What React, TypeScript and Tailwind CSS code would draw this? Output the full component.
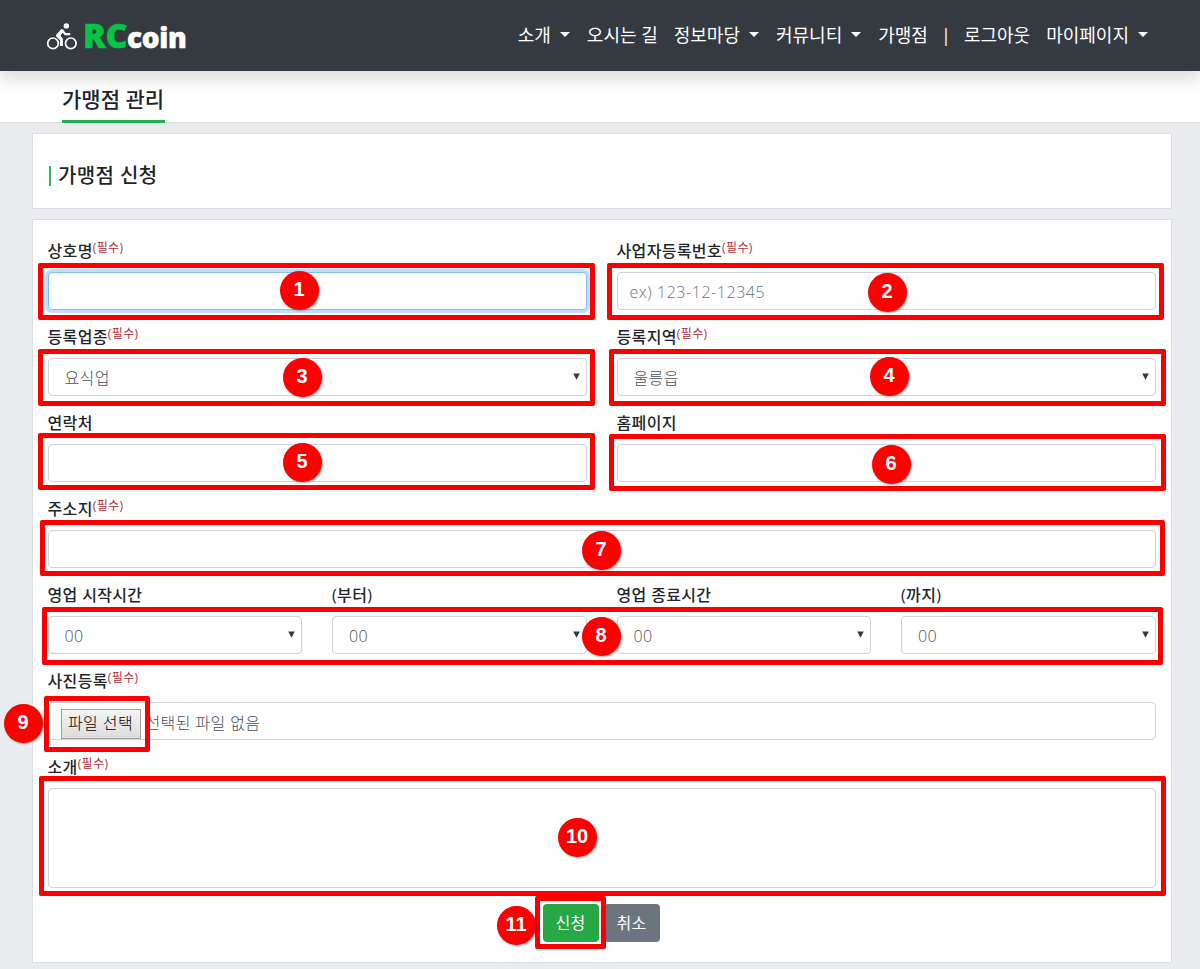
import React from "react";

type BoxSpec = { x: number; y: number; w: number; h: number };
type Badge = { n: number; x: number; y: number };

const boxes: BoxSpec[] = [
  { x: 38, y: 263, w: 557, h: 57 },
  { x: 607, y: 263, w: 557, h: 57 },
  { x: 38, y: 349, w: 557, h: 57 },
  { x: 609, y: 349, w: 557, h: 57 },
  { x: 38, y: 433, w: 557, h: 57 },
  { x: 609, y: 434, w: 557, h: 57 },
  { x: 40, y: 520, w: 1125, h: 56 },
  { x: 42, y: 607, w: 1121, h: 58 },
  { x: 44, y: 696, w: 106, h: 56 },
  { x: 39, y: 776, w: 1127, h: 120 },
  { x: 535, y: 896, w: 71, h: 53 },
];

const badges: Badge[] = [
  { n: 1, x: 299, y: 290 },
  { n: 2, x: 887, y: 292 },
  { n: 3, x: 302, y: 377 },
  { n: 4, x: 889, y: 376 },
  { n: 5, x: 302, y: 462 },
  { n: 6, x: 891, y: 464 },
  { n: 7, x: 601, y: 550 },
  { n: 8, x: 601, y: 636 },
  { n: 9, x: 23, y: 723 },
  { n: 10, x: 577, y: 837 },
  { n: 11, x: 516, y: 925 },
];

function Caret() {
  return <span className="ml-[9px] mr-px inline-block border-x-[5px] border-t-[5px] border-x-transparent border-t-white" />;
}

function NavItem({ text, caret = false }: { text: string; caret?: boolean }) {
  return (
    <a className="flex items-center whitespace-nowrap px-2">
      {text}
      {caret && <Caret />}
    </a>
  );
}

function Field({ label, required = false, children }: { label: string; required?: boolean; children: React.ReactNode }) {
  return (
    <div className="mb-4 flex flex-col">
      <div className="mb-[10px] flex h-[22px] items-center whitespace-nowrap font-medium tracking-[0.35px]">
        <span>{label}</span>
        {required && <span className="relative -top-[3px] text-[12px] font-normal tracking-[0.4px] text-[#b3303c]">(필수)</span>}
      </div>
      {children}
    </div>
  );
}

const control = "flex h-[38px] items-center rounded border border-[#ced4da] bg-white font-light text-[#495057]";

function TextBox({ placeholder = "" }: { placeholder?: string }) {
  return (
    <div className={control + " px-3"}>
      <span className="pt-px font-['Open_Sans'] tracking-[0.55px] text-[#6c757d]">{placeholder}</span>
    </div>
  );
}

function SelectBox({ value }: { value: string }) {
  return (
    <div className={control + " justify-between pl-4 pr-[6px]"}>
      <span className="pt-px tracking-[0.4px]">{value}</span>
      <svg width="7" height="7" viewBox="0 0 7 7" className="mb-[2px]">
        <path d="M0.2 0.5H6.8L3.5 6.8Z" fill="#343a40" />
      </svg>
    </div>
  );
}

function BikeLogo() {
  return (
    <svg width="32" height="28" viewBox="0 0 32 28" fill="none" stroke="#fff">
      <circle cx="7" cy="21.3" r="5.3" strokeWidth="1.7" />
      <circle cx="24.8" cy="21.3" r="5.3" strokeWidth="1.7" />
      <circle cx="20.3" cy="3.9" r="2.7" fill="#fff" stroke="none" />
      <path d="M15.4 24V17.4L11.6 13.6L16.6 8.2" strokeWidth="3" strokeLinejoin="round" />
      <path d="M16.2 8.4L19.4 12.2H24.2" strokeWidth="2.2" strokeLinejoin="round" />
      <path d="M10 13.4L15.4 7L18.2 8.2L14.6 13.6L16.6 17.4H14Z" fill="#fff" stroke="none" />
    </svg>
  );
}

export default function App() {
  return (
    <div className="relative flex h-[969px] w-[1200px] flex-col overflow-hidden bg-[#ebecf0] font-['Open_Sans','Noto_Sans_CJK_KR',sans-serif] text-[16px] leading-6 text-[#212529]">
      <header className="z-10 flex h-[71px] shrink-0 items-center justify-between bg-[#343a40] pl-[46px] pr-[43px] shadow-[0_8px_16px_rgba(0,0,0,0.15)]">
        <div className="flex items-center">
          <BikeLogo />
          <div className="ml-[5px] flex items-baseline whitespace-nowrap pb-[2px] font-['Open_Sans'] font-extrabold leading-none">
            <span className="text-[34px] tracking-[-0.5px] text-[#06c346] [-webkit-text-stroke:0.5px_#06c346]">RC</span>
            <span className="text-[28px] tracking-[-0.4px] text-white [-webkit-text-stroke:0.5px_#fff]">coin</span>
          </div>
        </div>
        <nav className="flex items-center pb-[2px] text-[18px] text-white">
          <NavItem text="소개" caret />
          <NavItem text="오시는 길" />
          <NavItem text="정보마당" caret />
          <NavItem text="커뮤니티" caret />
          <NavItem text="가맹점" />
          <span className="flex w-5 justify-center">|</span>
          <NavItem text="로그아웃" />
          <NavItem text="마이페이지" caret />
        </nav>
      </header>
      <div className="flex h-[52px] shrink-0 items-stretch border-b border-[#dcdee2] bg-white pl-[62px]">
        <div className="-mb-px flex w-[103px] items-center whitespace-nowrap border-b-3 border-[#23b14d] pt-[6px] text-[21px] font-medium">
          가맹점 관리
        </div>
      </div>
      <section className="ml-8 mt-[10px] flex h-[76px] w-[1140px] shrink-0 items-center border border-[#dcdee2] bg-white pl-4 pt-[9px]">
        <span className="h-5 w-[2px] bg-[#33bb66]" />
        <h1 className="ml-[7px] whitespace-nowrap text-[20px] font-medium tracking-[0.4px]">가맹점 신청</h1>
      </section>
      <section className="ml-8 mt-[10px] h-[744px] w-[1140px] shrink-0 border border-[#dcdee2] bg-white pl-[14.5px] pr-[15.5px] pt-5">
        <div className="grid grid-cols-2 gap-x-[30px]">
          <Field label="상호명" required>
            <div className="h-[38px] rounded border border-[#80bdff] bg-white shadow-[0_0_0_3px_#bfdeff]" />
          </Field>
          <Field label="사업자등록번호" required>
            <TextBox placeholder="ex) 123-12-12345" />
          </Field>
          <Field label="등록업종" required>
            <SelectBox value="요식업" />
          </Field>
          <Field label="등록지역" required>
            <SelectBox value="울릉읍" />
          </Field>
          <Field label="연락처">
            <TextBox />
          </Field>
          <Field label="홈페이지">
            <TextBox />
          </Field>
        </div>
        <Field label="주소지" required>
          <TextBox />
        </Field>
        <div className="grid grid-cols-4 gap-x-[30px]">
          {["영업 시작시간", "(부터)", "영업 종료시간", "(까지)"].map((label) => (
            <Field key={label} label={label}>
              <SelectBox value="00" />
            </Field>
          ))}
        </div>
        <Field label="사진등록" required>
          <div className={control + " pl-3 pt-[5px]"}>
            <span className="flex h-[30px] w-20 items-center justify-center whitespace-nowrap border border-[#a0a0a0] bg-gradient-to-b from-[#f4f4f4] to-[#dddddd] pb-px font-light tracking-[0.4px] text-black">
              파일 선택
            </span>
            <span className="ml-[5px] whitespace-nowrap pb-px tracking-[0.4px]">선택된 파일 없음</span>
          </div>
        </Field>
        <Field label="소개" required>
          <div className="h-[100px] rounded border border-[#ced4da] bg-white" />
        </Field>
        <div className="flex justify-center gap-[5px] pr-px text-white">
          <button className="h-[38px] w-14 whitespace-nowrap rounded bg-[#28a745] pb-px tracking-[0.3px]">신청</button>
          <button className="h-[38px] w-14 whitespace-nowrap rounded bg-[#6c757d] pb-px tracking-[0.3px]">취소</button>
        </div>
      </section>
      {boxes.map((b, i) => (
        <div
          key={i}
          className="absolute z-20 rounded-[2px] border-5 border-[#fb0000]"
          style={{ left: b.x, top: b.y, width: b.w, height: b.h }}
        />
      ))}
      {badges.map((b) => (
        <div
          key={b.n}
          className="absolute z-20 flex size-[39px] items-center justify-center rounded-full bg-[#fd0000] pb-[3px] font-['Liberation_Sans'] text-[20px] font-bold text-white shadow-[1px_1px_2px_rgba(0,0,0,0.35)]"
          style={{ left: b.x - 19.5, top: b.y - 19.5 }}
        >
          {b.n}
        </div>
      ))}
    </div>
  );
}
